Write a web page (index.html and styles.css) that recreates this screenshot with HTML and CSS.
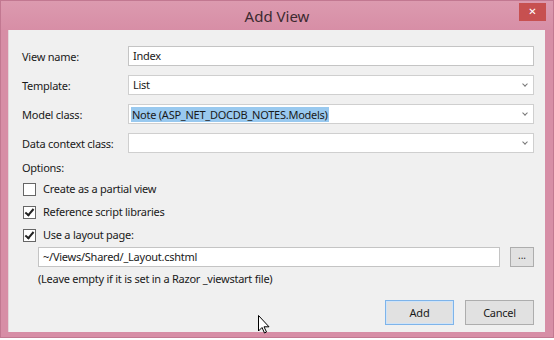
FILE: index.html
```html
<!DOCTYPE html>
<html lang="en">
<head>
    <meta charset="UTF-8">
    <title>Add View</title>
    <link rel="stylesheet" href="styles.css">
</head>
<body>
    <div class="window">
        <div class="titlebar">
            <span></span>
            <span class="title">Add View</span>
            <button class="close">&#x2715;</button>
        </div>
        <div class="client">
            <div class="form">
                <label>View name:</label>
                <div class="field">Index</div>

                <label>Template:</label>
                <div class="field combo">List<span class="arrow"></span></div>

                <label>Model class:</label>
                <div class="field combo"><span class="selected">Note (ASP_NET_DOCDB_NOTES.Models)</span><span class="arrow"></span></div>

                <label>Data context class:</label>
                <div class="field combo"><span class="arrow"></span></div>
            </div>

            <div class="options">Options:</div>
            <div class="checks">
                <div class="check"><span class="box"></span>Create as a partial view</div>
                <div class="check"><span class="box checked"></span>Reference script libraries</div>
                <div class="check"><span class="box checked"></span>Use a layout page:</div>
            </div>

            <div class="layout-row">
                <div class="field">~/Views/Shared/_Layout.cshtml</div>
                <button class="browse">...</button>
            </div>
            <div class="hint">(Leave empty if it is set in a Razor _viewstart file)</div>

            <div class="buttons">
                <button class="btn default">Add</button>
                <button class="btn">Cancel</button>
            </div>

            <!-- mouse pointer -->
            <svg class="cursor" viewBox="0 0 12 19" width="12" height="19">
                <path d="M0.5 0.5 L0.5 16 L4 12.5 L6.5 18 L8.5 17 L6 11.8 L11 11.8 Z" fill="#fff" stroke="#000" stroke-width="1"/>
            </svg>
        </div>
    </div>
</body>
</html>
```

FILE: styles.css
```css
body {
    margin: 0;
    background: #fff;
    font-family: "Noto Sans", "Open Sans", sans-serif;
    font-size: 11px;
    letter-spacing: -0.25px;
    color: #1a1a1a;
}
.window {
    width: 552px;
    height: 336px;
    background: #d78ea6;
    border: 1px solid #c27891;
    display: flex;
    flex-direction: column;
}
.titlebar {
    height: 29px;
    display: grid;
    grid-template-columns: 1fr auto 1fr;
    align-items: start;
    background: linear-gradient(#dc9aaf, #d78ea6);
}
.title {
    font-size: 15px;
    letter-spacing: 0;
    color: #3c2a30;
    line-height: 30px;
}
.close {
    justify-self: end;
    margin: 2px 7px 0 0;
    width: 27px;
    height: 18px;
    padding: 0;
    border: none;
    background: #c75050;
    color: #fff;
    font-size: 10px;
    font-weight: bold;
    font-family: "DejaVu Sans", sans-serif;
    line-height: 18px;
}
.client {
    position: relative;
    margin: 0 8px 0 7px;
    height: 302px;
    background: #f0f0f0;
    border-left: 1px solid #e4d6db;
    padding: 16px 11px 0 13px;
    box-sizing: border-box;
}
.form {
    display: grid;
    grid-template-columns: 106px 1fr;
    row-gap: 9px;
    align-items: center;
}
.field {
    height: 20px;
    box-sizing: border-box;
    background: #fff;
    border: 1px solid #c4c4c4;
    padding: 0 4px;
    line-height: 18px;
    display: flex;
    align-items: center;
    position: relative;
}
.combo {
    border-color: #cfcfcf;
}
.arrow {
    position: absolute;
    right: 6px;
    top: 6px;
    width: 3px;
    height: 3px;
    border-right: 1px solid #777;
    border-bottom: 1px solid #777;
    transform: rotate(45deg);
}
.selected {
    background: #99c9ef;
    margin-left: -2px;
    padding: 0 1px;
    line-height: 15px;
}
.options {
    margin-top: 7px;
    line-height: 16px;
}
.checks {
    margin-top: 5px;
    display: flex;
    flex-direction: column;
    gap: 7px;
}
.check {
    display: flex;
    align-items: center;
    gap: 7px;
    line-height: 16px;
    padding-left: 1px;
}
.box {
    width: 11px;
    height: 11px;
    border: 1px solid #666;
    background: #fff;
    position: relative;
}
.box.checked::after {
    content: "";
    position: absolute;
    left: 3px;
    top: 0px;
    width: 3px;
    height: 7px;
    border-right: 2px solid #222;
    border-bottom: 2px solid #222;
    transform: rotate(40deg);
}
.layout-row {
    margin: 4px 0 0 16px;
    display: flex;
    gap: 10px;
}
.layout-row .field {
    flex: 1;
}
.browse {
    width: 24px;
    height: 20px;
    padding: 0 0 4px;
    border: 1px solid #adadad;
    background: #e1e1e1;
    font-family: inherit;
    font-size: 10px;
    color: #333;
}
.hint {
    margin: 4px 0 0 16px;
    line-height: 16px;
}
.buttons {
    margin-top: 13px;
    display: flex;
    justify-content: flex-end;
    gap: 11px;
}
.btn {
    width: 69px;
    height: 25px;
    border: 1px solid #adadad;
    background: #e1e1e1;
    font-family: inherit;
    font-size: 11px;
    letter-spacing: -0.25px;
    color: #1a1a1a;
}
.btn.default {
    border-color: #7eb4ea;
    box-shadow: inset 0 0 0 1px #cfe3f7;
}
.cursor {
    position: absolute;
    left: 249px;
    top: 285px;
}
```
